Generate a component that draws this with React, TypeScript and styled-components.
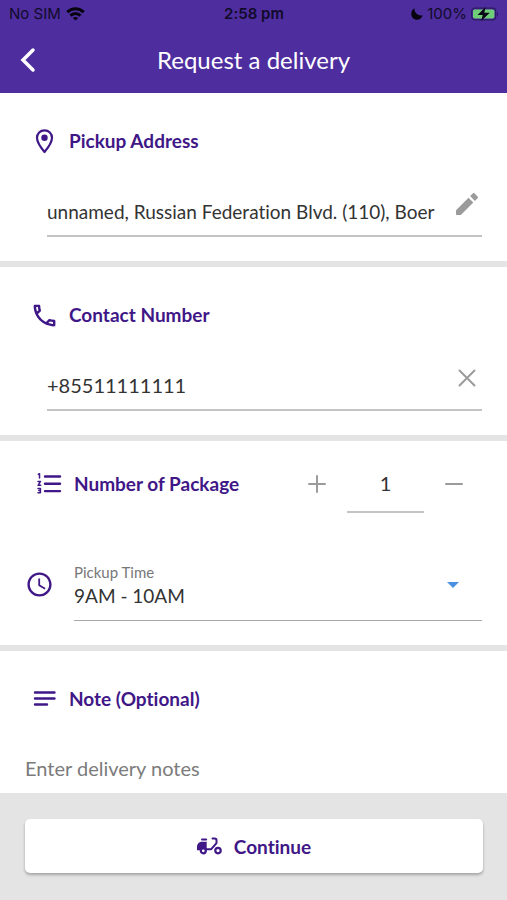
import React, { useState } from "react";
import styled, { createGlobalStyle } from "styled-components";
import { MdAccessTime, MdOutlineCall } from "react-icons/md";

const purple = "#3f1787";
const bar = "#4e2e9f";
const rule = "#c4c4c4";
const band = "#e4e4e4";
const ink = "#333333";

const GlobalStyle = createGlobalStyle`
  *, *::before, *::after { box-sizing: border-box; }
  body { margin: 0; background: #fff; font-variant-ligatures: none; }
  body, button, input, select, textarea { font-family: Lato, sans-serif; }
  button, input, select, textarea { font-variant-ligatures: none; }
`;

const Page = styled.div`
  display: flex;
  flex-direction: column;
  min-height: 100vh;
  color: ${ink};
`;

const Header = styled.header`
  background: ${bar};
  padding-bottom: 8px;
`;

const StatusBar = styled.div`
  display: grid;
  grid-template-columns: 1fr auto 1fr;
  align-items: center;
  height: 27px;
  padding: 0 8px 0 9px;
  color: #110a2a;
  font-family: Inter, sans-serif;
  font-size: 15px;
`;

const StatusGroup = styled.div<{ $end?: boolean }>`
  display: flex;
  align-items: center;
  gap: ${(p) => (p.$end ? 4 : 5)}px;
  justify-content: ${(p) => (p.$end ? "flex-end" : "flex-start")};
`;

const Clock = styled.span`
  font-weight: 600;
`;

const NavBar = styled.div`
  display: grid;
  grid-template-columns: 56px 1fr 56px;
  align-items: center;
  height: 58px;
`;

const Title = styled.h1`
  margin: 0;
  padding-top: 8px;
  color: #fff;
  font-size: 24px;
  font-weight: 400;
  line-height: 32px;
  text-align: center;
`;

const IconButton = styled.button`
  display: flex;
  align-items: center;
  justify-content: center;
  flex: none;
  width: 30px;
  height: 40px;
  padding: 0;
  border: 0;
  background: none;
  color: #9b9b9b;
  cursor: pointer;
`;

const BackButton = styled(IconButton)`
  width: 56px;
  height: 46px;
  padding-top: 8px;
  color: #fff;
`;

const Main = styled.main`
  flex: 1;
`;

const Section = styled.section`
  padding: 32px 25px 24px;
  border-bottom: 6px solid ${band};

  &:last-child {
    padding-bottom: 0;
    border-bottom: 0;
  }
`;

const PackageSection = styled(Section)`
  padding-top: 14px;
`;

const Heading = styled.h2<{ $inset?: number }>`
  display: flex;
  align-items: center;
  gap: 10px;
  margin: 0;
  padding-left: ${(p) => p.$inset ?? 5}px;
  color: ${purple};
  font-size: 20px;
  font-size: 19px;
  font-weight: 700;
  line-height: 32px;
  white-space: nowrap;
`;

const Field = styled.div`
  display: flex;
  align-items: flex-start;
  justify-content: space-between;
  height: 57px;
  margin: 23px 0 0 22px;
  padding-top: 1px;
  border-bottom: 2px solid ${rule};
`;

const TextInput = styled.input<{ $compact?: boolean }>`
  flex: 1;
  min-width: 0;
  height: 28px;
  margin-top: 16px;
  padding: 0;
  border: 0;
  outline: 0;
  background: none;
  color: ${ink};
  font-size: ${(p) => (p.$compact ? 19 : 20)}px;
`;

const FieldButton = styled(IconButton)`
  height: 46px;
  margin-left: 11px;
`;

const PackageRow = styled.div`
  display: flex;
  align-items: center;
  justify-content: space-between;
  height: 58px;
`;

const Stepper = styled.div`
  display: flex;
  align-items: center;
  gap: 15px;
  padding-right: 13px;
`;

const CountInput = styled.input`
  width: 77px;
  height: 58px;
  padding: 0;
  border: 0;
  border-bottom: 2px solid ${rule};
  outline: 0;
  background: none;
  color: ${ink};
  font-size: 20px;
  text-align: center;
`;

const TimeRow = styled.div`
  display: flex;
  align-items: flex-start;
  gap: 20px;
  margin-top: 48px;
  color: ${purple};
`;

const TimeIcon = styled(MdAccessTime)`
  flex: none;
  margin-top: 9px;
`;

const TimeField = styled.div`
  display: grid;
  flex: 1;
  padding-top: 1px;
  border-bottom: 1px solid #a8a8a8;
`;

const TimeLabel = styled.label`
  color: #777777;
  font-size: 15px;
  line-height: 20px;
`;

const SelectWrap = styled.div`
  display: flex;
  align-items: flex-start;
  position: relative;
  height: 38px;
`;

const TimeSelect = styled.select`
  width: 100%;
  height: 26px;
  padding: 0;
  border: 0;
  outline: 0;
  appearance: none;
  background: none;
  color: ${ink};
  font-size: 19px;
`;

const Caret = styled.svg`
  position: absolute;
  top: 0;
  right: 23px;
  pointer-events: none;
`;

const NoteInput = styled.textarea`
  display: block;
  width: 100%;
  height: 41px;
  margin-top: 37px;
  padding: 0;
  border: 0;
  outline: 0;
  resize: none;
  background: none;
  color: ${ink};
  font-size: 20px;
  line-height: 32px;

  &::placeholder { color: #7b7b7b; opacity: 1; }
`;

const Footer = styled.footer`
  padding: 26px 24px 27px 25px;
  background: ${band};
`;

const ContinueButton = styled.button`
  display: flex;
  align-items: center;
  justify-content: center;
  gap: 12px;
  width: 100%;
  height: 54px;
  padding: 0;
  border: 0;
  border-radius: 5px;
  background: #fff;
  box-shadow: 0 2px 3px rgba(0, 0, 0, 0.28);
  color: ${purple};
  font-size: 19px;
  font-weight: 700;
  cursor: pointer;
`;

const WifiIcon = () => (
  <svg width="19" height="14" viewBox="0 0 19 14" fill="none" stroke="#06030f" strokeWidth="3" aria-hidden="true">
    <path d="M1.2 5.2C6 .6 13 .6 17.8 5.2" />
    <path d="M4.4 8.7c3-2.8 7.2-2.8 10.2 0" />
    <path d="M9.5 13.6 6.8 11c1.5-1.4 3.9-1.4 5.400 0z" fill="#06030f" stroke="none" />
  </svg>
);

const MoonIcon = () => (
  <svg width="12" height="12" viewBox="0 0 12 12" fill="#06030f" aria-hidden="true">
    <path d="M3.5.3C3 4.300 6.500 8.300 11.700 7.200 10.600 10.200 8.400 11.800 6 11.800 2.800 11.800.3 9.300.3 6 .3 3.400 1.500 1.300 3.500.3Z" />
  </svg>
);

const BatteryIcon = () => (
  <svg width="28" height="14" viewBox="0 0 28 14" aria-hidden="true">
    <rect x=".7" y="1.2" width="24" height="11.6" rx="3" fill="#4e2e9f" stroke="#2b1a63" strokeWidth="1.2" />
    <rect x="2" y="2.5" width="21.4" height="9" rx="1.8" fill="#6fce77" />
    <path d="M26 5c1.6.6 1.6 3.4 0 4z" fill="#2b1a63" />
    <path d="M14.6 0 6.5 8h5.2l-1.5 6 8.6-8.2h-5.5z" fill="#0b0718" />
  </svg>
);

const BackIcon = () => (
  <svg width="18" height="26" viewBox="0 0 18 26" fill="none" stroke="currentColor" strokeWidth="3.5" strokeLinecap="round" aria-hidden="true">
    <path d="M14 3 4 13l10 10" />
  </svg>
);

const PinIcon = () => (
  <svg width="29" height="29" viewBox="0 0 29 29" fill="none" aria-hidden="true">
    <path
      d="M14.5 3.3c-4.3 0-7.5 3.2-7.5 7.500 0 5.200 5.200 11.500 7.500 14.200 2.300-2.700 7.500-9 7.500-14.200 0-4.300-3.200-7.500-7.500-7.500z"
      stroke="currentColor"
      strokeWidth="2.2"
      strokeLinejoin="round"
    />
    <circle cx="14.5" cy="10.8" r="3.2" fill="currentColor" />
  </svg>
);

const NumberedListIcon = () => (
  <svg width="29" height="29" viewBox="0 0 29 29" fill="none" stroke="currentColor" strokeLinecap="round" aria-hidden="true">
    <path d="M10 6.500h15M10 13.800h15M10 21.100h15" strokeWidth="2.400" />
    <path
      d="M3.3 4.300l1.200-.5v4.200M3 11.400h2.500l-2.400 3.900h2.600M3 18.400h2.400v4.400H3M3.800 20.600h1.600"
      strokeWidth="1.5"
      strokeLinejoin="round"
    />
  </svg>
);

const NotesIcon = () => (
  <svg width="29" height="29" viewBox="0 0 29 29" stroke="currentColor" strokeWidth="2.4" strokeLinecap="round" aria-hidden="true">
    <path d="M5 7.500h19.500M5 13.500h19.500M5 19.500h12" />
  </svg>
);

const PencilIcon = () => (
  <svg width="24" height="24" viewBox="0 0 24 24" fill="currentColor" aria-hidden="true">
    <path d="M1 18.6v3.4c0 .6.4 1 1 1h3.4c.3 0 .5-.1.7-.3L18.3 10.5l-4.8-4.8L1.3 17.9c-.2.2-.3.4-.3.7z" />
    <path d="M22.6 6.2c.5-.5.5-1.3 0-1.8l-3-3c-.5-.5-1.3-.5-1.8 0l-2.7 2.7 4.8 4.8z" />
  </svg>
);

const ScooterIcon = () => (
  <svg width="25" height="18" viewBox="0 0 25 18" fill="none" stroke="currentColor" strokeLinecap="round" strokeLinejoin="round" aria-hidden="true">
    <path d="M0 13.300V10c0-3 2-5.200 5-5.200h4.700v8.500z" fill="currentColor" stroke="none" />
    <path d="M5 2.400h4.200" strokeWidth="2" />
    <path d="M9 12.300h5l5.500-6.200V3.200c0-1.200-.6-1.800-1.800-1.800h-2.200" strokeWidth="2" />
    <circle cx="6.300" cy="13.800" r="2.500" fill="#fff" strokeWidth="2.200" />
    <circle cx="21" cy="13.600" r="2.700" fill="#fff" strokeWidth="2.200" />
  </svg>
);

const glyphs = {
  plus: "M1 9h16M9 1v16",
  minus: "M1 9h16",
  close: "M1.5 1.5l15 15M16.5 1.5l-15 15",
};

const Glyph = ({ name }: { name: keyof typeof glyphs }) => (
  <svg width="18" height="18" viewBox="0 0 18 18" fill="none" stroke="currentColor" strokeWidth="2" strokeLinecap="round" aria-hidden="true">
    <path d={glyphs[name]} />
  </svg>
);

export default function App() {
  const [address, setAddress] = useState("unnamed, Russian Federation Blvd. (110), Boer");
  const [phone, setPhone] = useState("+85511111111");
  const [count, setCount] = useState(1);
  const [time, setTime] = useState("9AM - 10AM");
  const [note, setNote] = useState("");

  return (
    <>
      <GlobalStyle />
      <Page>
        <Header>
          <StatusBar>
            <StatusGroup>
              <span>No SIM</span>
              <WifiIcon />
            </StatusGroup>
            <Clock>2:58 pm</Clock>
            <StatusGroup $end>
              <MoonIcon />
              <span>100%</span>
              <BatteryIcon />
            </StatusGroup>
          </StatusBar>
          <NavBar>
            <BackButton type="button" aria-label="Back">
              <BackIcon />
            </BackButton>
            <Title>Request a delivery</Title>
          </NavBar>
        </Header>

        <Main>
          <Section>
            <Heading id="address">
              <PinIcon />
              Pickup Address
            </Heading>
            <Field>
              <TextInput
                $compact
                aria-labelledby="address"
                value={address}
                onChange={(e) => setAddress(e.target.value)}
              />
              <FieldButton type="button" aria-label="Edit address">
                <PencilIcon />
              </FieldButton>
            </Field>
          </Section>

          <Section>
            <Heading id="contact">
              <MdOutlineCall size={29} />
              Contact Number
            </Heading>
            <Field>
              <TextInput type="tel" aria-labelledby="contact" value={phone} onChange={(e) => setPhone(e.target.value)} />
              <FieldButton type="button" aria-label="Clear number" onClick={() => setPhone("")}>
                <Glyph name="close" />
              </FieldButton>
            </Field>
          </Section>

          <PackageSection>
            <PackageRow>
              <Heading id="packages" $inset={10}>
                <NumberedListIcon />
                Number of Package
              </Heading>
              <Stepper>
                <IconButton type="button" aria-label="Add a package" onClick={() => setCount(count + 1)}>
                  <Glyph name="plus" />
                </IconButton>
                <CountInput
                  inputMode="numeric"
                  aria-labelledby="packages"
                  value={count}
                  onChange={(e) => setCount(Number(e.target.value) || 1)}
                />
                <IconButton type="button" aria-label="Remove a package" onClick={() => setCount(Math.max(1, count - 1))}>
                  <Glyph name="minus" />
                </IconButton>
              </Stepper>
            </PackageRow>
            <TimeRow>
              <TimeIcon size={29} />
              <TimeField>
                <TimeLabel htmlFor="time">Pickup Time</TimeLabel>
                <SelectWrap>
                  <TimeSelect id="time" value={time} onChange={(e) => setTime(e.target.value)}>
                    <option>9AM - 10AM</option>
                    <option>10AM - 11AM</option>
                    <option>11AM - 12PM</option>
                  </TimeSelect>
                  <Caret width="12" height="6" viewBox="0 0 12 6" aria-hidden="true">
                    <path d="M0 0h12L6 6z" fill="#4a90e2" />
                  </Caret>
                </SelectWrap>
              </TimeField>
            </TimeRow>
          </PackageSection>

          <Section>
            <Heading id="note">
              <NotesIcon />
              Note (Optional)
            </Heading>
            <NoteInput
              aria-labelledby="note"
              placeholder="Enter delivery notes"
              value={note}
              onChange={(e) => setNote(e.target.value)}
            />
          </Section>
        </Main>

        <Footer>
          <ContinueButton type="button">
            <ScooterIcon />
            Continue
          </ContinueButton>
        </Footer>
      </Page>
    </>
  );
}
